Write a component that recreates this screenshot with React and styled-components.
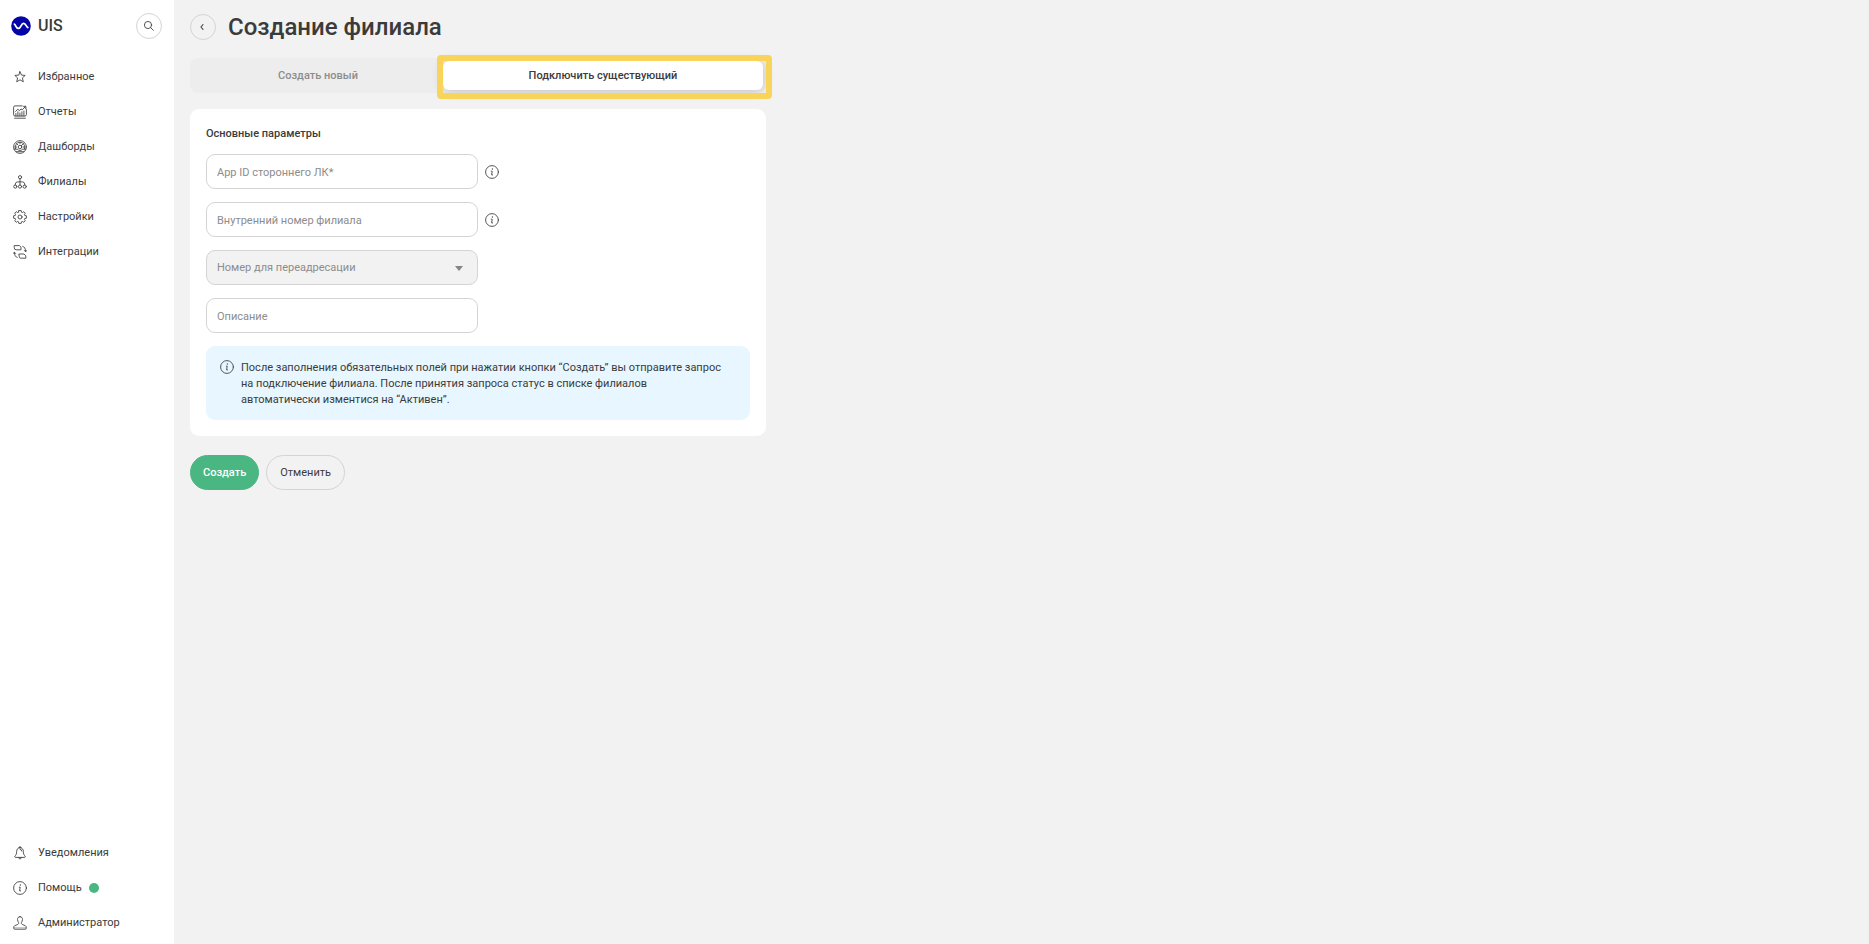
import React, { useState } from 'react'
import styled, { createGlobalStyle } from 'styled-components'

const StarIcon = () => (
    <Icon viewBox="0 0 14 14">
        <path d="M7 1.7 8.5 5.1 12.2 5.4 9.4 7.9 10.3 11.8 7 9.8 3.7 11.8 4.6 7.9 1.8 5.4 5.5 5.1Z" />
    </Icon>
)

const ReportIcon = () => (
    <Icon viewBox="0 0 14 14">
        <path d="M9.2.9H2Q.6.9.6 2.3V9.6Q.6 11 2 11H12Q13.4 11 13.4 9.6V4.5" />
        <path d="M1.6 13.2H12.4" />
        <path d="M2.6 6.4 4.8 4.2 6.5 5.7 8 3.9 9.2 4.8 12.4 1.7M10.9 1.3H12.9V3.3Z" />
        <path d="M2.9 8.5V11M4.9 6.8V11M6.9 8V11M8.9 6.8V11M10.9 6V11" />
    </Icon>
)

const DashboardIcon = () => (
    <Icon viewBox="0 0 14 14">
        <circle cx="7" cy="7" r="6.4" />
        <path d="M2.4 8.8A4.9 4.9 0 1 1 11.6 8.8" />
        <circle cx="7" cy="7" r="1.8" />
        <path d="M7 2.2V3.6M3.6 3.6 4.7 4.7M10.4 3.6 8.2 5.8M2.1 7H3.6M10.4 7H11.9" />
        <path d="M1.2 9.2H4.6L5.6 10.4H8.4L9.4 9.2H12.8M3 11.7H11" />
    </Icon>
)

const BranchIcon = () => (
    <Icon viewBox="0 0 14 14">
        <circle cx="7" cy="2.2" r="1.6" />
        <circle cx="2.3" cy="11.6" r="1.6" />
        <circle cx="7" cy="11.6" r="1.6" />
        <circle cx="11.7" cy="11.6" r="1.6" />
        <path d="M7 3.8V10M2.3 10V9Q2.6 6.9 4.6 6.9H9.4Q11.4 6.9 11.7 9V10" />
    </Icon>
)

const GearIcon = () => (
    <Icon viewBox="0 0 14 14">
        <circle cx="7" cy="7" r="2" />
        <path d="M5.8.6H8.2L8.6 2.3 9.3 2.6 10.8 1.7 12.3 3.2 11.4 4.7 11.7 5.4 13.4 5.8V8.2L11.7 8.6 11.4 9.3 12.3 10.8 10.8 12.3 9.3 11.4 8.6 11.7 8.2 13.4H5.8L5.4 11.7 4.7 11.4 3.2 12.3 1.7 10.8 2.6 9.3 2.3 8.6.6 8.2V5.8L2.3 5.4 2.6 4.7 1.7 3.2 3.2 1.7 4.7 2.6 5.4 2.3Z" />
    </Icon>
)

const IntegrationIcon = () => (
    <Icon viewBox="0 0 14 14">
        <path d="M1.6.6H6.4L8 2.2V4.8H3.2Q1.2 4.8 1.2 3Z" />
        <path d="M6.2 9H11L12.8 10.8V13.2H7.8Q6.2 13.2 6.2 11.6Z" />
        <path d="M9.8 1.4Q12.5 1.8 12.6 6.6M11.4 5.5 12.6 6.8 13.7 5.5" />
        <path d="M4.2 12.4Q1.5 12 1.4 7.3M.3 8.5 1.4 7.2 2.6 8.5" />
    </Icon>
)

const BellIcon = () => (
    <Icon viewBox="0 0 14 14">
        <path d="M7 1.7C4.7 1.7 3.7 3.4 3.7 5.3 3.7 8.1 2.9 9 1.9 10.3 1.6 10.9 1.8 11.4 2.4 11.4H11.6C12.2 11.4 12.4 10.9 12.1 10.3 11.1 9 10.3 8.1 10.3 5.3 10.3 3.4 9.3 1.7 7 1.7Z" />
        <path d="M6 1.7Q6 .6 7 .6T8 1.7M7.2 3.3Q8.7 3.4 8.8 5M5.7 11.5Q5.8 13 7 13T8.3 11.5" />
    </Icon>
)

const InfoIcon = () => (
    <Icon viewBox="0 0 14 14">
        <circle cx="7" cy="7" r="6.4" />
        <path d="M6.3 6.2H7.2L6.6 9.9H7.6" />
        <path d="M7.4 3.9V4" strokeWidth="1.3" />
    </Icon>
)

const UserIcon = () => (
    <Icon viewBox="0 0 14 14">
        <path d="M7 .7C5.3.7 4.5 1.9 4.5 3.4 4.5 4.9 5.1 5.7 5.6 6.5 5.9 7.5 5.3 8.2 4.2 8.7L1.7 9.7C.9 10.1.7 10.9.7 12.2Q.7 13.2 1.7 13.2H12.3Q13.3 13.2 13.3 12.2C13.3 10.9 13.1 10.1 12.3 9.7L9.8 8.7C8.7 8.2 8.1 7.5 8.4 6.5 8.9 5.7 9.5 4.9 9.5 3.4 9.5 1.9 8.7.7 7 .7Z" />
        <path d="M1.2 11.8H12.8" strokeWidth="0.4" />
    </Icon>
)

const SearchIcon = () => (
    <Icon viewBox="0 0 14 14">
        <circle cx="6" cy="6" r="3.6" />
        <path d="M8.7 8.7 11.3 11.3" />
    </Icon>
)

const BackIcon = () => (
    <Icon viewBox="0 0 14 14">
        <path d="M7 4.7 4.9 7 7 9.3" strokeWidth="1.1" />
    </Icon>
)

const Logo = () => (
    <LogoMark viewBox="0 0 20 20">
        <circle cx="10" cy="10" r="9.8" />
        <path d="M3.4 8.1C5 9.3 4.9 12.3 7.4 12.4 10.3 12.5 9.8 7.3 12.7 7.4 14.9 7.5 14.8 10.3 16.8 11.6" />
    </LogoMark>
)

const mainLinks = [
    { title: 'Избранное', icon: <StarIcon /> },
    { title: 'Отчеты', icon: <ReportIcon /> },
    { title: 'Дашборды', icon: <DashboardIcon /> },
    { title: 'Филиалы', icon: <BranchIcon /> },
    { title: 'Настройки', icon: <GearIcon /> },
    { title: 'Интеграции', icon: <IntegrationIcon /> },
]

const serviceLinks = [
    { title: 'Уведомления', icon: <BellIcon /> },
    { title: 'Помощь', icon: <InfoIcon />, online: true },
    { title: 'Администратор', icon: <UserIcon /> },
]

const NavList = ({ links }) => (
    <Nav>
        {links.map(({ title, icon, online }) => (
            <NavLink href="#" key={title}>
                {icon}
                {title}
                {online && <Dot />}
            </NavLink>
        ))}
    </Nav>
)

const App = () => {
    const [tab, setTab] = useState('existing')

    return (
        <>
            <GlobalStyle />
            <Page>
                <Sidebar>
                    <Brand>
                        <Logo />
                        <span>UIS</span>
                        <RoundButton type="button" aria-label="Поиск"><SearchIcon /></RoundButton>
                    </Brand>
                    <NavList links={mainLinks} />
                    <Spacer />
                    <NavList links={serviceLinks} />
                </Sidebar>
                <Main>
                    <Header>
                        <RoundButton type="button" aria-label="Назад"><BackIcon /></RoundButton>
                        <h1>Создание филиала</h1>
                    </Header>
                    <Tabs role="tablist">
                        <Tab type="button" role="tab" $grow={25} $active={tab === 'new'} aria-selected={tab === 'new'} onClick={() => setTab('new')}>
                            Создать новый
                        </Tab>
                        <Tab type="button" role="tab" $grow={32} $active={tab === 'existing'} aria-selected={tab === 'existing'} onClick={() => setTab('existing')}>
                            Подключить существующий
                        </Tab>
                    </Tabs>
                    <form onSubmit={(e) => e.preventDefault()}>
                        <Card>
                            <h2>Основные параметры</h2>
                            <Row>
                                <Input aria-label="App ID стороннего ЛК" placeholder="App ID стороннего ЛК*" />
                                <InfoIcon />
                            </Row>
                            <Row>
                                <Input aria-label="Внутренний номер филиала" placeholder="Внутренний номер филиала" />
                                <InfoIcon />
                            </Row>
                            <Row>
                                <SelectBox>
                                    <Select aria-label="Номер для переадресации" disabled>
                                        <option>Номер для переадресации</option>
                                    </Select>
                                </SelectBox>
                            </Row>
                            <Row>
                                <Input aria-label="Описание" placeholder="Описание" />
                            </Row>
                            <Notice>
                                <InfoIcon />
                                <p>
                                    После заполнения обязательных полей при нажатии кнопки “Создать” вы отправите запрос
                                    <br />
                                    на подключение филиала. После принятия запроса статус в списке филиалов
                                    <br />
                                    автоматически изментися на “Активен”.
                                </p>
                            </Notice>
                        </Card>
                        <Actions>
                            <Button type="submit" $primary>Создать</Button>
                            <Button type="button">Отменить</Button>
                        </Actions>
                    </form>
                </Main>
            </Page>
        </>
    )
}
export default App

const GlobalStyle = createGlobalStyle`
    *{
        box-sizing: border-box;
    }
    body{
        margin: 0;
        background-color: #f2f2f2;
        color: #3b3b3b;
        font-family: Roboto, sans-serif;
        font-size: 11px;
        line-height: 16px;
    }
    h1, h2, p{
        margin: 0;
    }
    button, input, select{
        font: inherit;
        color: inherit;
    }
    button{
        cursor: pointer;
    }
`

const Icon = styled.svg`
    width: 14px;
    height: 14px;
    flex: none;
    fill: none;
    stroke: #444;
    stroke-width: 0.9;
    stroke-linejoin: round;
    stroke-linecap: round;
`

const LogoMark = styled.svg`
    width: 20px;
    height: 20px;
    circle{
        fill: #0505a5;
    }
    path{
        fill: none;
        stroke: white;
        stroke-width: 1.8;
        stroke-linecap: round;
    }
`

const Page = styled.div`
    display: flex;
    min-height: 100vh;
`

const Sidebar = styled.aside`
    display: flex;
    flex-direction: column;
    width: 174px;
    flex: none;
    padding: 13px 0 4px;
    background-color: white;
`

const Brand = styled.div`
    display: flex;
    align-items: center;
    gap: 7px;
    padding: 0 12px 0 11px;
    margin-bottom: 20px;
    span{
        flex: 1;
        font-size: 16px;
        font-weight: 500;
    }
`

const RoundButton = styled.button`
    display: flex;
    align-items: center;
    justify-content: center;
    width: 26px;
    height: 26px;
    padding: 0;
    border: 1px solid #d4d4d4;
    border-radius: 50%;
    background: transparent;
`

const Nav = styled.nav`
    display: flex;
    flex-direction: column;
`

const NavLink = styled.a`
    display: flex;
    align-items: center;
    height: 35px;
    padding-left: 13px;
    color: inherit;
    text-decoration: none;
    svg{
        margin-right: 11px;
    }
`

const Dot = styled.i`
    width: 10px;
    height: 10px;
    margin-left: 7px;
    border-radius: 50%;
    background-color: #4ab782;
`

const Spacer = styled.div`
    flex: 1;
`

const Main = styled.main`
    flex: 1;
    max-width: 608px;
    padding: 11px 16px;
`

const Header = styled.header`
    display: flex;
    align-items: center;
    gap: 12px;
    margin-bottom: 15px;
    h1{
        font-size: 24px;
        font-weight: 500;
        line-height: 32px;
    }
`

const Tabs = styled.div`
    display: flex;
    height: 35px;
    padding: 3px;
    margin-bottom: 16px;
    border-radius: 8px;
    background-color: #ededed;
`

const Tab = styled.button`
    position: relative;
    flex: ${({ $grow }) => $grow} 1 0;
    padding: 1px 0 0;
    border: none;
    border-radius: 6px;
    font-weight: 500;
    color: ${({ $active }) => $active ? '#3b3b3b' : '#8c8c8c'};
    background-color: ${({ $active }) => $active ? 'white' : 'transparent'};
    box-shadow: ${({ $active }) => $active ? '0 1px 12px rgba(0, 0, 0, 0.2)' : 'none'};
    &::after{
        content: '';
        display: ${({ $active }) => $active ? 'block' : 'none'};
        position: absolute;
        inset: -6px -9px -9px -6px;
        border: 6px solid #f9d45b;
        border-radius: 4px;
    }
`

const Card = styled.section`
    display: flex;
    flex-direction: column;
    gap: 13px;
    padding: 17px 16px 16px;
    border-radius: 9px;
    background-color: white;
    h2{
        font-size: 11px;
        font-weight: 500;
        line-height: 15px;
    }
`

const Row = styled.div`
    display: flex;
    align-items: center;
    gap: 7px;
`

const Input = styled.input`
    width: 272px;
    height: 35px;
    padding: 1px 10px 0;
    border: 1px solid #d4d4d4;
    border-radius: 9px;
    background-color: white;
    &::placeholder{
        color: #8c8c8c;
        opacity: 1;
    }
`

const SelectBox = styled.div`
    position: relative;
    width: 272px;
    &::after{
        content: '';
        position: absolute;
        right: 15px;
        top: 16px;
        border: 4px solid transparent;
        border-top: 5px solid #858585;
        border-bottom: none;
    }
`

const Select = styled.select`
    display: block;
    width: 100%;
    height: 35px;
    padding: 1px 10px 0;
    border: 1px solid #d4d4d4;
    border-radius: 9px;
    appearance: none;
    background-color: #f2f2f2;
    color: #8c8c8c;
    opacity: 1;
`

const Notice = styled.div`
    display: flex;
    gap: 7px;
    padding: 14px 16px 12px 14px;
    border-radius: 9px;
    background-color: #e7f6ff;
`

const Actions = styled.div`
    display: flex;
    gap: 7px;
    margin-top: 19px;
`

const Button = styled.button`
    height: 35px;
    padding: 0 ${({ $primary }) => $primary ? 12 : 13}px;
    border: 1px solid ${({ $primary }) => $primary ? '#4ab782' : '#d4d4d4'};
    border-radius: 18px;
    font-weight: ${({ $primary }) => $primary ? 500 : 400};
    color: ${({ $primary }) => $primary ? 'white' : '#3b3b3b'};
    background-color: ${({ $primary }) => $primary ? '#4ab782' : 'transparent'};
`
